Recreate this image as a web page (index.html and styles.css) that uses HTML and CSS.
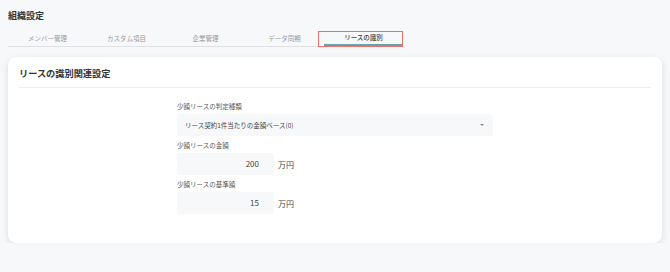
FILE: index.html
```html
<!DOCTYPE html>
<html lang="ja">
<head>
  <meta charset="UTF-8">
  <title>組織設定</title>
  <link rel="stylesheet" href="styles.css">
</head>
<body>
  <div class="page">
    <h1 class="page-title">組織設定</h1>

    <div class="tabs">
      <div class="tab">メンバー管理</div>
      <div class="tab">カスタム項目</div>
      <div class="tab">企業管理</div>
      <div class="tab">データ同期</div>
      <div class="tab active">リースの識別</div>
    </div>

    <div class="card">
      <div class="card-header">リースの識別関連設定</div>
      <div class="form">
        <div class="field">
          <label>少額リースの判定種類</label>
          <div class="select">
            <span>リース契約1件当たりの金額ベース(0)</span>
            <span class="caret"></span>
          </div>
        </div>
        <div class="field">
          <label>少額リースの金額</label>
          <div class="amount">
            <div class="input">200</div>
            <span class="unit">万円</span>
          </div>
        </div>
        <div class="field">
          <label>少額リースの基準額</label>
          <div class="amount">
            <div class="input">15</div>
            <span class="unit">万円</span>
          </div>
        </div>
      </div>
    </div>
  </div>
</body>
</html>
```

FILE: styles.css
```css
body { margin: 0; background: #f7f8fa; font-family: "Noto Sans CJK JP", "Noto Sans", sans-serif; color: #333; }
.page { padding: 0 8px; }

.page-title { margin: 0; padding-top: 10px; font-size: 9px; line-height: 12px; font-weight: bold; color: #333; }

.tabs { display: flex; width: 395px; margin-top: 9px; border-bottom: 1px solid #dfe1e5; }
.tab {
  position: relative; width: 79px; height: 15px; box-sizing: border-box;
  font-size: 6.5px; line-height: 14px; text-align: center; color: #999;
}
.tab.active { color: #444; font-weight: 500; border-bottom: 2px solid #5aa9ae; line-height: 13px; }
.tab.active::before {
  content: ""; position: absolute; left: -6px; right: 0; top: 0; bottom: -3px;
  border: 1px solid #f26d6d;
}

.card {
  margin-top: 10px; background: #fff; border-radius: 8px; padding: 0 11px 29px;
  box-shadow: 0 2px 6px rgba(0,0,0,0.12);
}
.card-header {
  padding: 10px 0 8px; font-size: 9.2px; line-height: 12px; font-weight: bold; color: #333;
  border-bottom: 1px solid #eeeeee;
}

.form { margin-left: 158px; width: 316px; padding-top: 13px; display: flex; flex-direction: column; gap: 4px; }
.field label { display: block; font-size: 6.5px; line-height: 10px; margin-bottom: 3px; color: #555; }

.select {
  display: flex; align-items: center; justify-content: space-between; height: 22px;
  padding: 0 8px; background: #f7f8f9; border-radius: 3px; font-size: 6.5px; color: #444;
}
.caret { width: 0; height: 0; border-left: 2px solid transparent; border-right: 2px solid transparent; border-top: 2.5px solid #888; margin-right: 1px; }

.amount { display: flex; align-items: center; gap: 4px; }
.input {
  width: 97px; height: 22px; box-sizing: border-box; padding-right: 15px; background: #f7f8f9; border-radius: 3px;
  text-align: right; font-size: 8px; line-height: 22px; color: #444;
}
.unit { font-size: 8px; color: #444; }
```
